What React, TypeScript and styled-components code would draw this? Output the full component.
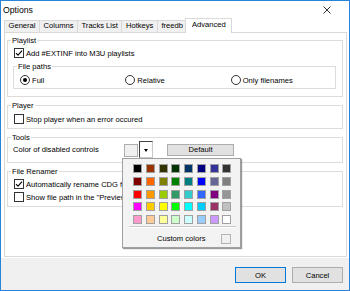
import React from 'react'
import styled, { createGlobalStyle } from 'styled-components'

const GlobalStyle = createGlobalStyle`
  html, body {
    margin: 0;
    padding: 0;
    background: #ffffff;
  }
  body {
    font-family: 'Liberation Sans', Arial, sans-serif;
    font-size: 7.6px;
    color: #000000;
  }
  * {
    box-sizing: border-box;
  }
`

const Window = styled.div`
  width: 350px;
  height: 291px;
  border: 1px solid #2b84d8;
  display: flex;
  flex-direction: column;
  background: #ffffff;
  overflow: hidden;
`
const TitleBar = styled.div`
  height: 17px;
  flex: none;
  display: flex;
  align-items: center;
  justify-content: space-between;
  padding-left: 2px;
  font-size: 8.7px;
`
const CloseBtn = styled.div`
  width: 30px;
  height: 17px;
  margin-right: 7px;
  display: flex;
  align-items: center;
  justify-content: center;
`
const Body = styled.div`
  flex: 1;
  display: flex;
  flex-direction: column;
  padding: 0 2px 1px 3px;
`
const TabStrip = styled.div`
  display: flex;
  align-items: flex-end;
  height: 14px;
  flex: none;
`
const Tab = styled.div<{ $active?: boolean }>`
  position: relative;
  height: ${(p) => (p.$active ? '15px' : '12px')};
  margin: ${(p) => (p.$active ? '0 -2px -1px -2px' : '0 0 0 -1px')};
  padding: ${(p) => (p.$active ? '0 5.5px' : '0 3.5px')};
  border: 1px solid #d9d9d9;
  border-bottom: none;
  background: ${(p) => (p.$active ? '#ffffff' : '#f0f0f0')};
  z-index: ${(p) => (p.$active ? 2 : 0)};
  line-height: ${(p) => (p.$active ? '12px' : '10px')};
  white-space: nowrap;
  &:first-child {
    margin-left: 0;
  }
`
const Panel = styled.div`
  position: relative;
  flex: 1;
  border: 1px solid #d9d9d9;
  padding: 3px 3px 0 2px;
  display: flex;
  flex-direction: column;
  gap: 4px;
`
const Group = styled.fieldset`
  margin: 0;
  min-width: 0;
  border: 1px solid #dcdcdc;
  padding: 0 6px 4px 5px;
`
const Legend = styled.legend`
  padding: 0 1px;
  margin-left: -2px;
  line-height: 9px;
  font-size: 7.6px;
`
const Row = styled.label<{ $top?: number }>`
  display: flex;
  align-items: center;
  gap: 2px;
  height: 10px;
  margin-top: ${(p) => p.$top ?? 0}px;
  padding-left: 1px;
  white-space: nowrap;
`
const Box = styled.span`
  width: 10px;
  height: 10px;
  flex: none;
  border: 1px solid #333333;
  background: #ffffff;
  display: flex;
  align-items: center;
  justify-content: center;
`
const Radio = styled.span<{ $on?: boolean }>`
  width: 10px;
  height: 10px;
  flex: none;
  border: 1px solid #333333;
  border-radius: 50%;
  background: #ffffff;
  display: flex;
  align-items: center;
  justify-content: center;
  &::after {
    content: '';
    width: 4px;
    height: 4px;
    border-radius: 50%;
    background: ${(p) => (p.$on ? '#000000' : 'transparent')};
  }
`
const SubGroup = styled(Group)`
  margin-top: 4px;
  padding: 0 0 3px 5px;
`
const RadioGrid = styled.div`
  display: grid;
  grid-template-columns: repeat(3, 1fr);
  margin-top: 4px;
`
const ToolsRow = styled.div`
  display: flex;
  align-items: center;
  height: 17px;
  margin-top: -1px;
`
const ToolLabel = styled.span`
  width: 111px;
  white-space: nowrap;
`
const Picker = styled.div`
  position: relative;
  display: flex;
  align-items: flex-end;
  height: 17px;
`
const Swatch = styled.span`
  width: 14px;
  height: 13px;
  margin-bottom: 1px;
  border: 1px solid #adadad;
  background: #f0f0f0;
`
const ArrowBtn = styled.span`
  width: 14px;
  height: 17px;
  margin-left: 1px;
  border-left: 1px solid #404040;
  border-top: 1px solid #404040;
  border-right: 1px solid #c8c8c8;
  border-bottom: 1px solid #c8c8c8;
  background: #ffffff;
  display: flex;
  align-items: center;
  justify-content: center;
  &::after {
    content: '';
    border-left: 2.5px solid transparent;
    border-right: 2.5px solid transparent;
    border-top: 3px solid #000000;
    margin-top: 2px;
  }
`
const Button = styled.button<{ $default?: boolean }>`
  font: inherit;
  color: #000000;
  height: 16px;
  width: 51px;
  padding: 0;
  background: #e1e1e1;
  border: 1px solid ${(p) => (p.$default ? '#0078d7' : '#adadad')};
  border-radius: 0;
`
const DefaultButton = styled(Button)`
  width: 67px;
  height: 12px;
  margin-left: 14px;
  line-height: 10px;
`
const Popup = styled.div`
  position: absolute;
  top: 100%;
  left: -2px;
  width: 119px;
  height: 90px;
  z-index: 5;
  background: #f3f3f3;
  border: 1px solid #a0a0a0;
  box-shadow: 1px 1px 1px rgba(0, 0, 0, 0.4);
  padding: 5px 8px 0 10px;
`
const ColorGrid = styled.div`
  display: grid;
  grid-template-columns: repeat(8, 9px);
  grid-auto-rows: 9px;
  column-gap: 3.75px;
  row-gap: 3.75px;
`
const Cell = styled.span<{ $c: string }>`
  border: 1px solid #a0a0a0;
  background: ${(p) => p.$c};
`
const Divider = styled.div`
  margin: 2px -4px 0 -4px;
  border-top: 1px solid #c8c8c8;
  border-bottom: 1px solid #ffffff;
`
const CustomRow = styled.div`
  display: flex;
  align-items: center;
  height: 15px;
  margin-top: 3px;
  padding-left: 24px;
`
const CustomText = styled.span`
  flex: 1;
`
const CustomCell = styled.span`
  width: 10px;
  height: 10px;
  margin-right: 1px;
  border: 1px solid #b4b4b4;
  background: #f0f0f0;
`
const Footer = styled.div`
  height: 32px;
  flex: none;
  background: #f0f0f0;
  display: flex;
  justify-content: flex-end;
  gap: 6px;
  padding: 9px 6px 0 0;
`

const colors = [
  '#000000', '#993300', '#333300', '#003300', '#003366', '#000080', '#333399', '#333333',
  '#800000', '#ff6600', '#808000', '#008000', '#008080', '#0000ff', '#666699', '#808080',
  '#ff0000', '#ff9900', '#99cc00', '#339966', '#33cccc', '#3366ff', '#800080', '#969696',
  '#ff00ff', '#ffcc00', '#ffff00', '#00ff00', '#00ffff', '#00ccff', '#993366', '#c0c0c0',
  '#ff99cc', '#ffcc99', '#ffff99', '#ccffcc', '#ccffff', '#99ccff', '#cc99ff', '#ffffff',
]

const tabs = ['General', 'Columns', 'Tracks List', 'Hotkeys', 'freedb', 'Advanced']

function Check({ on }: { on?: boolean }) {
  return (
    <Box>
      {on && (
        <svg width='8' height='8' viewBox='0 0 8 8'>
          <path d='M1 4.2 L3 6.2 L7 1.6' fill='none' stroke='#000' strokeWidth='1.1' />
        </svg>
      )}
    </Box>
  )
}

export default function App() {
  return (
    <>
      <GlobalStyle />
      <Window>
        <TitleBar>
          <span>Options</span>
          <CloseBtn>
            <svg width='8' height='8' viewBox='0 0 8 8'>
              <path d='M0.5 0.5 L7.5 7.5 M7.5 0.5 L0.5 7.5' stroke='#000' strokeWidth='0.8' />
            </svg>
          </CloseBtn>
        </TitleBar>
        <Body>
          <TabStrip>
            {tabs.map((t) => (
              <Tab key={t} $active={t === 'Advanced'}>
                {t}
              </Tab>
            ))}
          </TabStrip>
          <Panel>
            <Group>
              <Legend>Playlist</Legend>
              <Row $top={3}>
                <Check on />
                Add #EXTINF into M3U playlists
              </Row>
              <SubGroup>
                <Legend>File paths</Legend>
                <RadioGrid>
                  <Row>
                    <Radio $on />
                    Full
                  </Row>
                  <Row>
                    <Radio />
                    Relative
                  </Row>
                  <Row>
                    <Radio />
                    Only filenames
                  </Row>
                </RadioGrid>
              </SubGroup>
              <div style={{ height: 3 }} />
            </Group>
            <Group>
              <Legend>Player</Legend>
              <Row $top={4}>
                <Check />
                Stop player when an error occured
              </Row>
            </Group>
            <Group>
              <Legend>Tools</Legend>
              <ToolsRow>
                <ToolLabel>Color of disabled controls</ToolLabel>
                <Picker>
                  <Swatch />
                  <ArrowBtn />
                  <Popup>
                    <ColorGrid>
                      {colors.map((c, i) => (
                        <Cell key={i} $c={c} />
                      ))}
                    </ColorGrid>
                    <Divider />
                    <CustomRow>
                      <CustomText>Custom colors</CustomText>
                      <CustomCell />
                    </CustomRow>
                  </Popup>
                </Picker>
                <DefaultButton>Default</DefaultButton>
              </ToolsRow>
            </Group>
            <Group>
              <Legend>File Renamer</Legend>
              <Row $top={3}>
                <Check on />
                Automatically rename CDG files
              </Row>
              <Row $top={3}>
                <Check />
                Show file path in the "Preview" column
              </Row>
            </Group>
          </Panel>
        </Body>
        <Footer>
          <Button $default>OK</Button>
          <Button>Cancel</Button>
        </Footer>
      </Window>
    </>
  )
}
